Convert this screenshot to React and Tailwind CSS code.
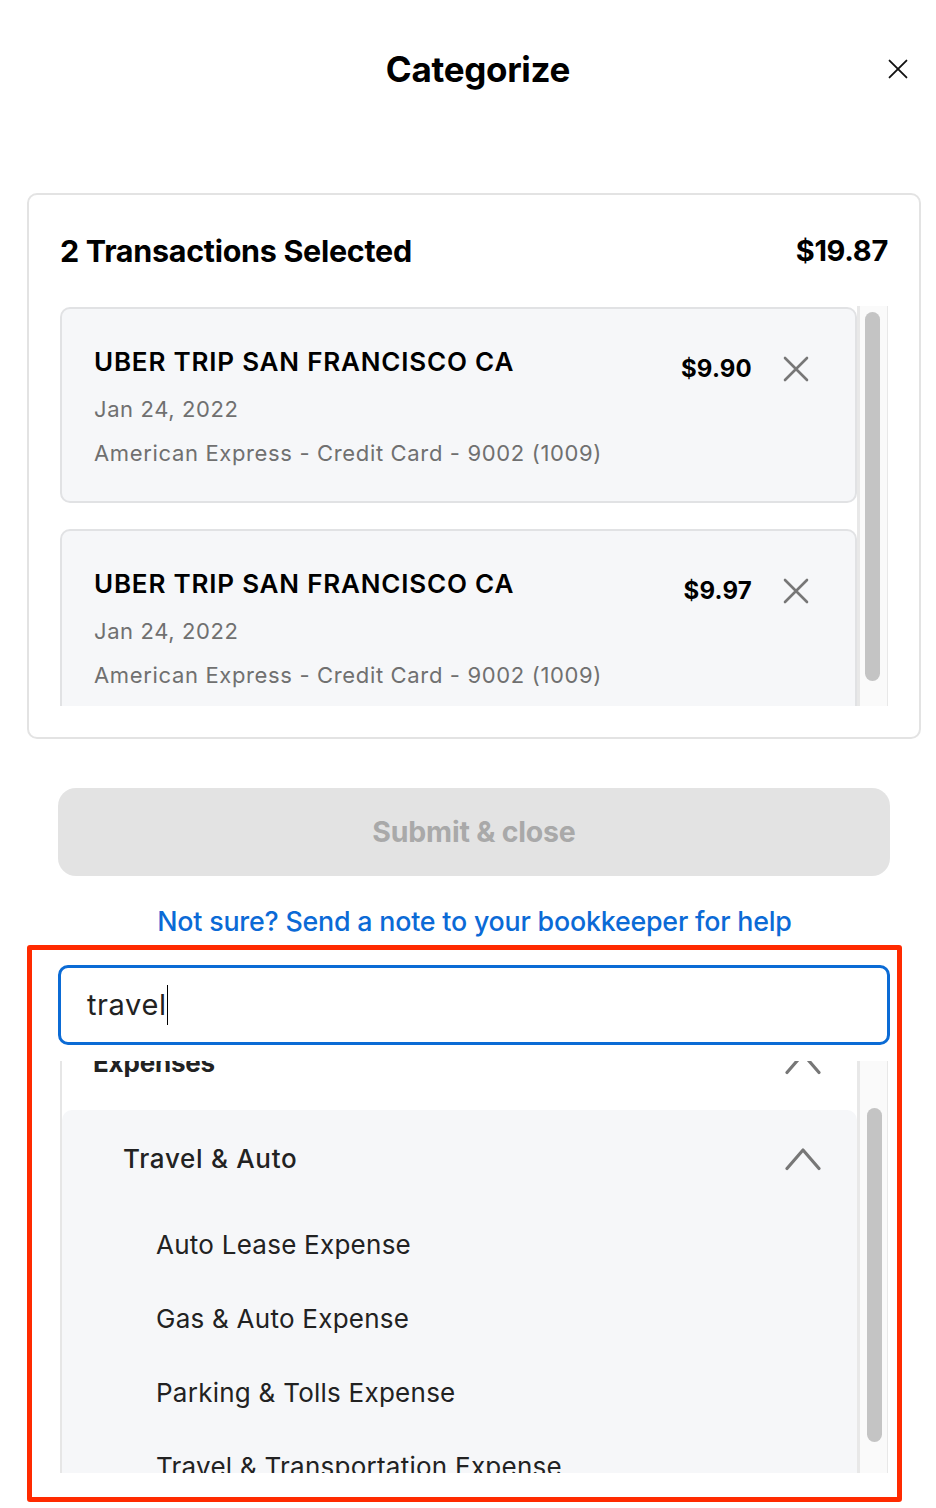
import React from 'react';

const font = { fontFamily: 'Inter, "Liberation Sans", sans-serif' };

const CloseIcon = ({ className, size = 26, stroke = '#777', width = 2.6 }) => (
  <svg className={className} width={size} height={size} viewBox="0 0 26 26" fill="none">
    <path d="M2 2L24 24M24 2L2 24" stroke={stroke} strokeWidth={width} strokeLinecap="round" />
  </svg>
);

const ChevronUp = ({ className }) => (
  <svg className={className} width="36" height="24" viewBox="0 0 36 24" fill="none">
    <path d="M2 21.5L18 3L34 21.5" stroke="#777" strokeWidth="3.2" strokeLinecap="round" strokeLinejoin="round" />
  </svg>
);

const transactions = [
  { id: 1, name: 'UBER TRIP SAN FRANCISCO CA', date: 'Jan 24, 2022', account: 'American Express - Credit Card - 9002 (1009)', amount: '$9.90' },
  { id: 2, name: 'UBER TRIP SAN FRANCISCO CA', date: 'Jan 24, 2022', account: 'American Express - Credit Card - 9002 (1009)', amount: '$9.97' },
];

const categories = ['Auto Lease Expense', 'Gas & Auto Expense', 'Parking & Tolls Expense', 'Travel & Transportation Expense'];

const TransactionCard = ({ tx }) => (
  <div className="h-[196px] shrink-0 rounded-[10px] border-2 border-[#e1e2e4] bg-[#f6f7f9] pl-[32px] pr-[46px] pt-[32px] flex">
    <div className="flex-1 flex flex-col">
      <div className="h-[40px] flex items-center text-[26px] font-semibold text-black tracking-[0.8px]">{tx.name}</div>
      <div className="mt-[8px] h-[40px] flex items-center text-[22px] text-[#707070] tracking-[0.6px]">{tx.date}</div>
      <div className="mt-[4px] h-[40px] flex items-center text-[22px] text-[#707070] tracking-[0.65px]">{tx.account}</div>
    </div>
    <div className="flex items-start gap-[31px] pt-[8px]">
      <div className="h-[40px] flex items-center text-[24px] font-bold text-black tracking-[0.2px]">{tx.amount}</div>
      <div className="h-[40px] flex items-center"><CloseIcon /></div>
    </div>
  </div>
);

const Scrollbar = ({ thumbTop, thumbHeight, thumbLeft }) => (
  <div className="w-[31px] shrink-0 bg-[#fafafa] border-l-[3px] border-r border-[#e8e8e8] flex flex-col">
    <div className={`${thumbTop} ${thumbLeft} ${thumbHeight} w-[15px] rounded-full bg-[#c4c4c4]`} />
  </div>
);

export default function App() {
  return (
    <div className="w-[936px] h-[1508px] bg-white relative overflow-hidden" style={font}>
      {/* Header */}
      <div className="h-[138px] grid grid-cols-[1fr_auto_1fr] items-center">
        <div />
        <h1 className="pl-[20px] text-[35px] font-bold text-black tracking-[-0.3px]">Categorize</h1>
        <div className="flex justify-end pr-[28px]">
          <CloseIcon size={20} stroke="#111" width={2.4} />
        </div>
      </div>

      {/* Selected transactions */}
      <div className="mt-[55px] ml-[27px] w-[894px] h-[546px] rounded-[10px] border-2 border-[#e3e3e3] px-[31px] flex flex-col">
        <div className="h-[111px] flex items-center justify-between">
          <span className="text-[30.5px] font-bold text-black tracking-[-0.3px]">2 Transactions Selected</span>
          <span className="text-[29px] font-bold text-black tracking-[-0.3px]">$19.87</span>
        </div>
        <div className="h-[400px] flex">
          <div className="flex-1 overflow-hidden flex flex-col gap-[26px] pt-px">
            {transactions.map(tx => (
              <TransactionCard key={tx.id} tx={tx} />
            ))}
          </div>
          <Scrollbar thumbTop="mt-[6px]" thumbLeft="ml-[5px]" thumbHeight="h-[369px]" />
        </div>
      </div>

      {/* Submit */}
      <button className="mt-[49px] ml-[58px] w-[832px] h-[88px] rounded-[18px] bg-[#e3e3e3] text-[28.5px] font-bold text-[#a9a9a9] flex items-center justify-center tracking-[-0.2px]">
        Submit &amp; close
      </button>

      <div className="mt-[27px] pl-[13px] h-[36px] flex items-center justify-center text-[26.8px] font-medium text-[#0b6ad6] tracking-[-0.2px]">
        Not sure? Send a note to your bookkeeper for help
      </div>

      {/* Search */}
      <div className="mt-[26px] ml-[58px] w-[832px] h-[80px] rounded-[10px] border-[3px] border-[#0b6bd5] pl-[26px] flex items-center">
        <span className="text-[29px] text-[#222] tracking-[0.6px]">travel</span>
        <span className="w-px h-[40px] bg-black" />
      </div>

      {/* Category list */}
      <div className="mt-[16px] ml-[60px] w-[828px] h-[412px] flex border-l-2 border-[#e6e6e6]">
        <div className="flex-1 overflow-hidden">
          <div className="-mt-[46px]">
            <div className="h-[95px] pl-[31px] pr-[36px] flex items-center justify-between">
              <span className="text-[26px] font-bold text-[#222] tracking-[-0.2px]">Expenses</span>
              <ChevronUp />
            </div>
            <div className="rounded-t-[10px] bg-[#f6f7f9]">
              <div className="h-[97px] pl-[61px] pr-[36px] flex items-center justify-between">
                <span className="text-[26px] font-medium text-[#222] tracking-[0.7px]">Travel &amp; Auto</span>
                <ChevronUp />
              </div>
              {categories.map(c => (
                <div key={c} className="h-[74px] pl-[94px] flex items-center text-[26px] text-[#222] tracking-[0.25px]">
                  {c}
                </div>
              ))}
            </div>
          </div>
        </div>
        <Scrollbar thumbTop="mt-[47px]" thumbLeft="ml-[7px]" thumbHeight="h-[334px]" />
      </div>

      {/* Annotation frame */}
      <div className="absolute left-[27px] top-[945px] w-[875px] h-[557px] border-[5px] border-[#ff2a00] rounded-[3px] pointer-events-none" />
    </div>
  );
}
